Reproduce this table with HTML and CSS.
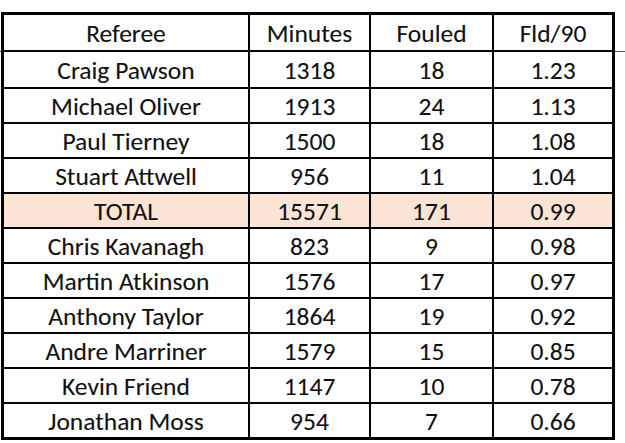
FILE: index.html
```html
<!DOCTYPE html>
<html lang="en">
<head>
<meta charset="utf-8">
<title>Referee fouls</title>
<link rel="stylesheet" href="styles.css">
</head>
<body>
<div class="table">
  <div class="cell head">Referee</div><div class="cell head">Minutes</div><div class="cell head">Fouled</div><div class="cell head last">Fld/90</div>
  <div class="cell">Craig Pawson</div><div class="cell">1318</div><div class="cell">18</div><div class="cell last">1.23</div>
  <div class="cell">Michael Oliver</div><div class="cell">1913</div><div class="cell">24</div><div class="cell last">1.13</div>
  <div class="cell">Paul Tierney</div><div class="cell">1500</div><div class="cell">18</div><div class="cell last">1.08</div>
  <div class="cell">Stuart Attwell</div><div class="cell">956</div><div class="cell">11</div><div class="cell last">1.04</div>
  <div class="cell total">TOTAL</div><div class="cell total">15571</div><div class="cell total">171</div><div class="cell total last">0.99</div>
  <div class="cell">Chris Kavanagh</div><div class="cell">823</div><div class="cell">9</div><div class="cell last">0.98</div>
  <div class="cell">Martin Atkinson</div><div class="cell">1576</div><div class="cell">17</div><div class="cell last">0.97</div>
  <div class="cell">Anthony Taylor</div><div class="cell">1864</div><div class="cell">19</div><div class="cell last">0.92</div>
  <div class="cell">Andre Marriner</div><div class="cell">1579</div><div class="cell">15</div><div class="cell last">0.85</div>
  <div class="cell">Kevin Friend</div><div class="cell">1147</div><div class="cell">10</div><div class="cell last">0.78</div>
  <div class="cell bottom">Jonathan Moss</div><div class="cell bottom">954</div><div class="cell bottom">7</div><div class="cell bottom last">0.66</div>
</div>
</body>
</html>
```

FILE: styles.css
```css
html, body {
  margin: 0;
  padding: 0;
}
body {
  width: 625px;
  height: 443px;
  overflow: hidden;
  background: #fff linear-gradient(#5a5a5a, #5a5a5a) 0 51px / 100% 1px no-repeat;
  font-family: "Carlito", "Lato", "Liberation Sans", sans-serif;
  color: #000;
}
.table {
  display: grid;
  grid-template-columns: 246px 121px 123px 118px;
  grid-template-rows: 37px 37px repeat(9, 35px) 33px;
  width: 614px;
  box-sizing: border-box;
  margin: 12px 0 0 1px;
  border: 3px solid #000;
  background: #fff;
}
.cell {
  box-sizing: border-box;
  border-right: 2px solid #000;
  border-bottom: 2px solid #000;
  display: flex;
  align-items: center;
  justify-content: center;
  padding-top: 3px;
  font-size: 25.5px;
  line-height: 1;
  white-space: nowrap;
  color: #111;
  -webkit-text-stroke: 0.1px #111;
}
.cell.last {
  border-right: none;
}
.cell.bottom {
  border-bottom: none;
}
.cell.total {
  background: #fbe4d5;
}
```
